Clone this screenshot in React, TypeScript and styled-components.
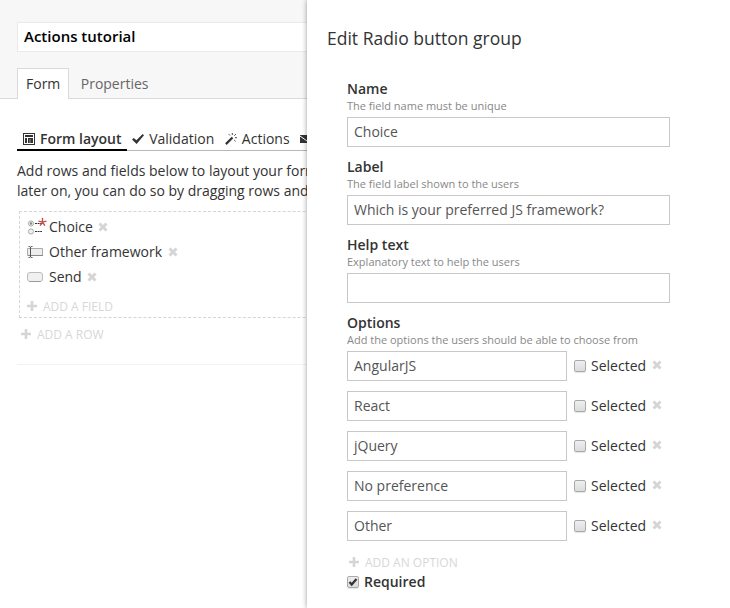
import React from "react";
import styled, { createGlobalStyle } from "styled-components";

const GlobalStyle = createGlobalStyle`
  * { box-sizing: border-box; }
  body {
    margin: 0;
    background: #fff;
    color: #333;
    font: 14px/20px "Open Sans", sans-serif;
  }
`;

const Page = styled.div`
  display: grid;
  grid-template-columns: 307px 1fr;
  height: 608px;
  overflow: hidden;
`;

const Editor = styled.main`
  min-width: 0;
  overflow: hidden;
  white-space: nowrap;
`;

const Header = styled.header`
  height: 99px;
  padding: 22px 0 0 17px;
  background: #f7f7f7;
  border-bottom: 1px solid #dadada;
`;

const FormTitle = styled.div`
  width: 400px;
  height: 30px;
  padding: 3px 6px;
  border: 1px solid #eaeaea;
  background: #fff;
  color: #000;
  font-size: 15px;
  font-weight: 600;
`;

const Tabs = styled.nav`
  display: flex;
  margin-top: 16px;
`;

const Tab = styled.div<{ $active?: boolean }>`
  height: 31px;
  padding: 5px 8px 0;
  border: 1px solid ${(p) => (p.$active ? "#dadada" : "transparent")};
  border-bottom: 0;
  background: ${(p) => (p.$active ? "#fff" : "transparent")};
  color: ${(p) => (p.$active ? "#333" : "#666")};
  & + & { margin-left: 2.4px; }
`;

const Content = styled.section`
  width: 420px;
  padding: 30px 0 0 17px;
`;

const SubTabs = styled.nav`
  display: flex;
  height: 22px;
  box-shadow: inset 0 -1px #b8b8b8;
`;

const SubTab = styled.div<{ $active?: boolean }>`
  display: flex;
  height: 22px;
  padding: 0 5px 0 6px;
  border-bottom: 2px solid ${(p) => (p.$active ? "#000" : "transparent")};
  font-weight: ${(p) => (p.$active ? 600 : 400)};
  svg { flex: none; margin: 4px 5px 0 0; }
  & + & { margin-left: -0.4px; }
`;

const Intro = styled.p`
  margin: 10px 0;
`;

const FieldsBox = styled.div`
  height: 107px;
  margin-left: 2px;
  padding: 2px 0 0 7px;
  border: 1px dashed #d5d5d5;
`;

const FieldItem = styled.div`
  display: flex;
  align-items: center;
  height: 25px;
  svg:first-child { margin-right: 2px; }
  svg:last-child { margin-left: 5.5px; }
`;

const AddLink = styled.div<{ $indent: number; $top: number }>`
  display: flex;
  align-items: center;
  height: 18px;
  margin: ${(p) => p.$top}px 0 0 ${(p) => p.$indent}px;
  color: #d7d7d7;
  font-size: 12px;
  svg { margin: -3px 6px 0 0; }
`;

const Divider = styled.hr`
  height: 1px;
  margin: 20px 0 0;
  border: 0;
  background: #f3f3f3;
`;

const Drawer = styled.aside`
  z-index: 1;
  padding: 26px 20px 0;
  background: #fff;
  box-shadow: 0 0 5px rgba(0, 0, 0, 0.4);
`;

const DrawerTitle = styled.h1`
  margin: 0;
  font-size: 17.5px;
  line-height: 24px;
  font-weight: 400;
`;

const Fields = styled.form`
  width: 343px;
  padding: 29px 0 0 20px;
`;

const Field = styled.div`
  height: 78px;
`;

const Label = styled.div`
  font-weight: 600;
`;

const Hint = styled.div`
  height: 18px;
  margin-top: -1px;
  margin-bottom: 1px;
  color: #888;
  font-size: 11px;
  line-height: 16px;
`;

const Input = styled.div<{ $width?: number }>`
  width: ${(p) => p.$width ?? 323}px;
  height: 30px;
  padding: 4px 6px;
  border: 1px solid #c8c8c8;
  color: #555;
`;

const OptionRow = styled.div`
  display: flex;
  align-items: center;
  height: 30px;
  margin-bottom: 10px;
  svg { margin: -2px 0 0 6px; }
`;

const Check = styled.span`
  display: flex;
  flex: none;
  width: 12px;
  height: 12px;
  margin: 0 5px 0 0;
  border: 1px solid #aaa;
  border-radius: 2px;
  background: linear-gradient(#eee, #dcdcdc);
  box-shadow: 0 1px 1px rgba(0, 0, 0, 0.1);
  && svg { margin: 0; }
  ${OptionRow} & { margin-left: 7px; }
`;

const Required = styled.div`
  display: flex;
  align-items: center;
  height: 20px;
  font-weight: 600;
`;

const Remove = () => (
  <svg width="10" height="10" viewBox="0 0 10 10">
    <path d="M1.5 1.5l7 7M8.5 1.5l-7 7" stroke="#d5d5d5" strokeWidth="2.9" />
  </svg>
);

const Plus = () => (
  <svg width="10" height="10" viewBox="0 0 10 10">
    <path d="M5 0v10M0 5h10" stroke="#d5d5d5" strokeWidth="2.6" />
  </svg>
);

const LayoutIcon = () => (
  <svg width="12" height="12" viewBox="0 0 12 12" fill="#333">
    <path fillRule="evenodd" d="M0 0h12v12H0zM1 1v10h10V1z" />
    <path d="M2 2h8v2H2zM2 5h2v5H2zM5 5h5v5H5z" />
    <path d="M7 6v4" stroke="#fff" strokeWidth=".5" />
  </svg>
);

const TickIcon = () => (
  <svg width="12" height="12" viewBox="0 0 12 12" fill="#333">
    <path d="M0 6.6L1.8 5l2.6 2.2L10.7 1 12 2.2 4.6 11z" />
  </svg>
);

const WandIcon = () => (
  <svg width="12" height="12" viewBox="0 0 12 12" fill="none" stroke="#333">
    <path d="M.9 11.1L7.5 4.5" strokeWidth="2.2" />
    <path d="M3.8 1.2l1.2 1.3M7.3 0v2M11 1L9.3 2.7M10 4.7h2M9.2 7l1.4 1.4" strokeWidth="0.9" />
  </svg>
);

const MailIcon = () => (
  <svg width="14" height="12" viewBox="0 0 14 12">
    <path d="M0 2h14v8H0z" fill="#333" />
    <path d="M0 3l7 5 7-5" fill="none" stroke="#fff" />
  </svg>
);

const RadioIcon = () => (
  <svg width="20" height="20" viewBox="0 0 20 20" fill="none">
    <circle cx="4" cy="6.5" r="2.6" fill="#eee" stroke="#aaa" />
    <circle cx="4" cy="6.5" r="1.2" fill="#888" />
    <circle cx="4" cy="14.5" r="2.6" fill="#eee" stroke="#aaa" />
    <path d="M8 6.5h6M8 14.5h7" stroke="#333" strokeDasharray="2 .6" />
    <path d="M15.5 5.2V1M15.5 5.2l-4-1.1M15.5 5.2l4-1.1M15.5 5.2l-2.4 3.4M15.5 5.2l2.4 3.4" stroke="#c0504a" strokeWidth="1.4" />
  </svg>
);

const TextFieldIcon = () => (
  <svg width="20" height="20" viewBox="0 0 20 20" fill="none">
    <path d="M.5 6.5h15v7H.5z" fill="#eee" stroke="#aaa" />
    <path d="M1 13.5h15" stroke="#888" />
    <path d="M1.5 4.5h1.3l.7.8.7-.8h1.3M3.5 5v10M1.5 15.5h1.3l.7-.8.7.8h1.3" stroke="#555" />
  </svg>
);

const ButtonIcon = () => (
  <svg width="20" height="20" viewBox="0 0 20 20">
    <rect x=".5" y="5.5" width="15" height="9" rx="2.5" fill="#f0f0f0" stroke="#bbb" />
    <path d="M2.5 14.5h11" stroke="#999" />
  </svg>
);

const options = ["AngularJS", "React", "jQuery", "No preference", "Other"];

const textFields = [
  { label: "Name", hint: "The field name must be unique", value: "Choice" },
  { label: "Label", hint: "The field label shown to the users", value: "Which is your preferred JS framework?" },
  { label: "Help text", hint: "Explanatory text to help the users", value: "" },
];

export default function App() {
  return (
    <Page>
      <GlobalStyle />
      <Editor>
        <Header>
          <FormTitle>Actions tutorial</FormTitle>
          <Tabs>
            <Tab $active>Form</Tab>
            <Tab>Properties</Tab>
          </Tabs>
        </Header>
        <Content>
          <SubTabs>
            <SubTab $active><LayoutIcon />Form layout</SubTab>
            <SubTab><TickIcon />Validation</SubTab>
            <SubTab><WandIcon />Actions</SubTab>
            <SubTab><MailIcon /></SubTab>
          </SubTabs>
          <Intro>
            Add rows and fields below to layout your form
            <br />
            later on, you can do so by dragging rows and
          </Intro>
          <FieldsBox>
            <FieldItem><RadioIcon />Choice<Remove /></FieldItem>
            <FieldItem><TextFieldIcon />Other framework<Remove /></FieldItem>
            <FieldItem><ButtonIcon />Send<Remove /></FieldItem>
            <AddLink $indent={0} $top={9}><Plus />ADD A FIELD</AddLink>
          </FieldsBox>
          <AddLink $indent={4} $top={8}><Plus />ADD A ROW</AddLink>
          <Divider />
        </Content>
      </Editor>
      <Drawer>
        <DrawerTitle>Edit Radio button group</DrawerTitle>
        <Fields>
          {textFields.map((f) => (
            <Field key={f.label}>
              <Label>{f.label}</Label>
              <Hint>{f.hint}</Hint>
              <Input>{f.value}</Input>
            </Field>
          ))}
          <Label>Options</Label>
          <Hint>Add the options the users should be able to choose from</Hint>
          {options.map((o) => (
            <OptionRow key={o}>
              <Input $width={220}>{o}</Input>
              <Check />
              Selected
              <Remove />
            </OptionRow>
          ))}
          <AddLink $indent={2} $top={13}><Plus />ADD AN OPTION</AddLink>
          <Required>
            <Check>
              <svg width="10" height="10" viewBox="0 0 10 10">
                <path d="M1.5 5l2.2 2.5L8.5 2" fill="none" stroke="#333" strokeWidth="2.2" />
              </svg>
            </Check>
            Required
          </Required>
        </Fields>
      </Drawer>
    </Page>
  );
}
